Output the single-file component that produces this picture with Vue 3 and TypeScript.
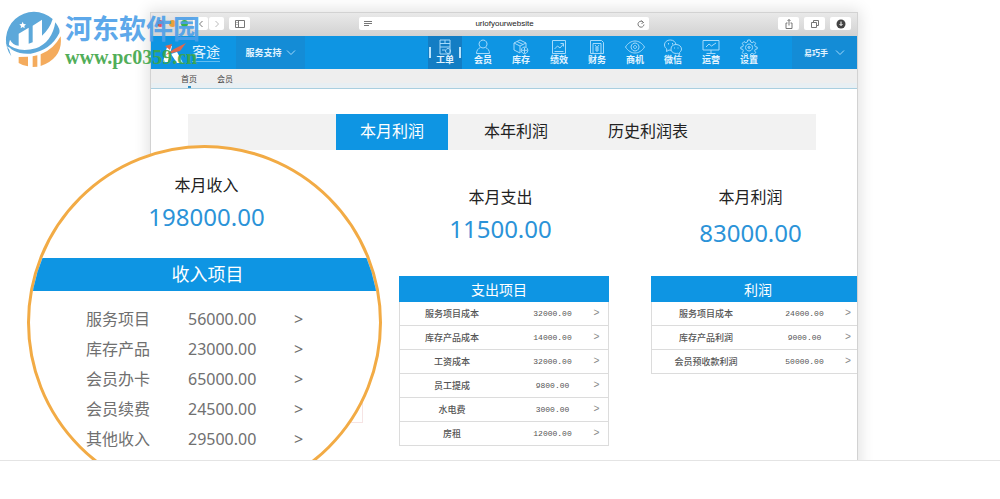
<script setup lang="ts">
import { ref } from 'vue'

interface NavItem { label: string; paths: string[] }
interface Entry { name: string; amount: string }

const address = ref('urlofyourwebsite')
const activeNav = ref(0)
const activeTab = ref(0)

const navItems: NavItem[] = [
  { label: '工单', paths: ['M3 1h10v14H3z', 'M3 4.5h10M3 8h10M8 1v3.5M5 11h3', 'M11 9.500a2.500 2.500 0 1 0 .1 0z'] },
  { label: '会员', paths: ['M8 1a4 4 0 1 0 .1 0z', 'M5.500 8.500C3 9.500 1.500 11.500 1.500 14.500h13c0-3-1.500-5-4-6'] },
  { label: '库存', paths: ['M1 4l6-3 6 3-6 3zM1 4v7l6 3V7M13 4v4', 'M4 2.500l6 3', 'M11.500 8a3.300 3.300 0 1 0 .1 0zM8.500 11.300h6M11.500 8.500v5.500'] },
  { label: '绩效', paths: ['M1.500 1.500h13v13h-13z', 'M3.500 10l3-3 2.500 2 3.500-4M3.500 12.500h9', 'M9.500 4.500h3v3'] },
  { label: '财务', paths: ['M1.500 1.500h11l2 2v11h-13z', 'M4 14V4.500h8V14', 'M6 6l2 2.500L10 6M8 8.500V13M6 9h4M6 11h4'] },
  { label: '商机', paths: ['M-1.500 8C1 4 4.500 2 8 2s7 2 9.500 6C15 12 11.500 14 8 14S1 12-1.500 8z', 'M8 4a4 4 0 1 0 .1 0z', 'M8 6.500a1.500 1.500 0 1 0 .1 0'] },
  { label: '微信', paths: ['M11 5.500C10.500 3 8.500 1 5.500 1 2 1-.5 3-.5 6c0 1.800 1 3 2.300 4L1.500 12.500 4 11l2 .3', 'M11 5.500c3 0 5.500 2 5.500 4.500 0 1.500-.8 2.600-2 3.500l.3 2-2.200-1.200C9 15 6 13 6 10s2.200-4.500 5-4.500z', 'M3.500 4v1.500M7.500 4v1.500M9.500 8.500v1M13 8.500v1'] },
  { label: '运营', paths: ['M0 1.500h16v9.500H0z', 'M8 11v3.500M3.500 14.500h9', 'M3 8l3-3 2.500 2L13 4'] },
  { label: '设置', paths: ['M6.800 1h2.400l.5 2 1.500.7 1.800-1.100 1.700 1.700-1.100 1.800.6 1.500 2 .5v1.800l-2 .5-.6 1.500 1.100 1.800-1.700 1.700-1.800-1.100-1.500.7-.5 2H6.800l-.5-2-1.500-.7L3 15.400l-1.700-1.700 1.100-1.800-.6-1.500-2-.5V8.100l2-.5.6-1.500L1.300 4.300 3 2.600l1.800 1.100L6.300 3z', 'M8 5a3.500 3.500 0 1 0 .1 0z', 'M8 7.500a1 1 0 1 0 .1 0'] },
]

const tabs = ['本月利润', '本年利润', '历史利润表']

const income: Entry[] = [
  { name: '服务项目', amount: '56000.00' },
  { name: '库存产品', amount: '23000.00' },
  { name: '会员办卡', amount: '65000.00' },
  { name: '会员续费', amount: '24500.00' },
  { name: '其他收入', amount: '29500.00' },
]

const reports: { key: string; title: string; total: string; heading: string; rows: Entry[] }[] = [
  {
    key: 'cost', title: '本月支出', total: '11500.00', heading: '支出项目',
    rows: [
      { name: '服务项目成本', amount: '32000.00' },
      { name: '库存产品成本', amount: '14000.00' },
      { name: '工资成本', amount: '32000.00' },
      { name: '员工提成', amount: '9800.00' },
      { name: '水电费', amount: '3000.00' },
      { name: '房租', amount: '12000.00' },
    ],
  },
  {
    key: 'profit', title: '本月利润', total: '83000.00', heading: '利润',
    rows: [
      { name: '服务项目成本', amount: '24000.00' },
      { name: '库存产品利润', amount: '9000.00' },
      { name: '会员预收款利润', amount: '50000.00' },
    ],
  },
]
</script>

<template>
  <div class="stage">
    <section class="window">
      <header class="titlebar">
        <span class="light red"></span><span class="light amber"></span><span class="light green"></span>
        <button class="chrome-btn back" aria-label="后退"><svg viewBox="0 0 8 8"><path d="M5.500 1L2.500 4l3 3" /></svg></button>
        <button class="chrome-btn forward" aria-label="前进"><svg viewBox="0 0 8 8"><path d="M2.500 1l3 3-3 3" /></svg></button>
        <button class="chrome-btn side" aria-label="边栏"><svg viewBox="0 0 10 8"><path d="M.5.5h9v7h-9zM3.500.5v7M1.500 2.500h1M1.500 4.500h1" /></svg></button>
        <div class="address">
          <svg viewBox="0 0 8 8"><path d="M0 1.500h8M0 3.500h8M0 5.500h5" /></svg>
          <input v-model="address" type="text" aria-label="网址" />
          <button class="reload" aria-label="刷新"><svg viewBox="0 0 8 8"><path d="M6.500 2.500A3 3 0 1 0 7 4.500M4.500.5l2 2-2 1" /></svg></button>
        </div>
        <div class="chrome-actions">
          <button class="chrome-btn" aria-label="分享"><svg viewBox="0 0 10 10"><path d="M3.500 4H2v5.500h6V4H6.500M5 6.500V.5M3.500 2L5 .5 6.500 2" /></svg></button>
          <button class="chrome-btn" aria-label="标签页"><svg viewBox="0 0 10 10"><path d="M1.500 3.500h5v5h-5zM3.500 3.500v-2h5v5h-2" /></svg></button>
          <button class="chrome-btn" aria-label="下载"><svg viewBox="0 0 10 10"><circle class="disc" cx="5" cy="5" r="4.500" /><path class="arrow" d="M5 2.500v4M3.500 5L5 6.500 6.500 5" /></svg></button>
        </div>
      </header>

      <nav class="nav">
        <a class="brand" href="#">
          <svg viewBox="0 0 26 22">
            <path d="M5 5l5-1-4 16H1z" fill="#fff" />
            <path d="M3 4l7-2-2 6z" fill="#e2674a" />
            <path d="M3 13l9-6L24 1l-6 8-8 2z" fill="#e2674a" />
            <path d="M9 12l6-2 6 11h-6z" fill="#fff" />
          </svg>
          <span class="brand-name">客途</span>
        </a>
        <button class="menu">服务支持<svg viewBox="0 0 10 8"><path d="M1 1.500l4 4 4-4" /></svg></button>
        <ul class="modules">
          <li v-for="(item, i) in navItems" :key="item.label">
            <button class="module" :class="{ active: i === activeNav }" @click="activeNav = i">
              <svg viewBox="-2 0 20 16"><path v-for="d in item.paths" :key="d" :d="d" /></svg>
              <span>{{ item.label }}</span>
            </button>
          </li>
        </ul>
        <button class="menu user">易巧手<svg viewBox="0 0 10 8"><path d="M1 1.500l4 4 4-4" /></svg></button>
      </nav>

      <div class="crumbs">
        <a class="current" href="#">首页</a>
        <a href="#">会员</a>
      </div>

      <div class="tabs" role="tablist">
        <button
          v-for="(tab, i) in tabs" :key="tab" class="tab" :class="{ active: i === activeTab }"
          role="tab" :aria-selected="i === activeTab" @click="activeTab = i"
        >{{ tab }}</button>
      </div>

      <div class="reports">
        <div class="report-slot"></div>
        <article v-for="report in reports" :key="report.key" class="report" :class="report.key">
          <div class="summary">
            <h2>{{ report.title }}</h2>
            <strong>{{ report.total }}</strong>
          </div>
          <table class="ledger">
            <colgroup><col class="col-name" /><col /><col class="col-go" /></colgroup>
            <thead><tr><th colspan="3">{{ report.heading }}</th></tr></thead>
            <tbody>
              <tr v-for="row in report.rows" :key="row.name">
                <td class="name">{{ row.name }}</td>
                <td class="amount">{{ row.amount }}</td>
                <td class="go">&gt;</td>
              </tr>
            </tbody>
          </table>
        </article>
      </div>
    </section>

    <section class="lens">
      <div class="lens-summary">
        <h2>本月收入</h2>
        <strong>198000.00</strong>
      </div>
      <h3>收入项目</h3>
      <table>
        <tbody>
          <tr v-for="row in income" :key="row.name">
            <td class="name">{{ row.name }}</td>
            <td class="amount">{{ row.amount }}</td>
            <td>&gt;</td>
          </tr>
        </tbody>
      </table>
    </section>

    <div class="watermark">
      <svg viewBox="15 18 168 168">
        <path d="M34 154A84 84 0 0 1 158 42Q150 70 126 92V44L98 62V112L86 116V68L56 86V122Q38 120 30 104Q22 126 34 154z" fill="#4b9fd6" />
        <path d="M18 122Q60 150 116 128Q156 110 172 62Q186 92 176 110Q140 148 84 152Q40 154 18 122z" fill="#fff" />
        <path d="M17 112Q52 146 108 130Q156 112 166 52Q182 74 178 84Q152 136 92 146Q36 150 17 112z" fill="#4b9fd6" />
        <path d="M56 156L84 155V184Q68 182 56 174zM98 154L112 151V185L98 186zM122 148Q160 134 182 94Q190 158 122 183z" fill="#f3a34c" />
        <path d="M68 50l3 7 7 1-5 5 1 7-6-4-6 4 1-7-5-5 7-1z" fill="#fff" />
      </svg>
      <div class="watermark-text">
        <span class="site-name">河东软件园</span>
        <span class="site-url">www.pc0359.cn</span>
      </div>
    </div>
  </div>
</template>

<style>
body {
  margin: 0;
  background: #fff;
}
</style>

<style scoped>
* {
  box-sizing: border-box;
}

.stage {
  position: relative;
  height: 461px;
  padding: 13px 143px 0 151px;
  overflow: hidden;
  border-bottom: 1px solid #e4e4e4;
  font-family: "Noto Sans", "Noto Sans CJK SC", sans-serif;
  color: #333;
}

button {
  margin: 0;
  padding: 0;
  border: 0;
  background: none;
  font: inherit;
  color: inherit;
}

a {
  color: inherit;
  text-decoration: none;
}

h2,
h3 {
  margin: 0;
  font-weight: 400;
}

svg {
  display: block;
  flex: none;
  fill: none;
}

.window {
  min-height: 500px;
  background: #fff;
  box-shadow: 0 0 0 1px #d2d2d2, 0 0 14px 3px rgba(0, 0, 0, 0.12);
}

.titlebar {
  display: flex;
  align-items: center;
  height: 23px;
  padding: 0 6px 2px 6px;
  background: linear-gradient(#e9e9e9, #d2d2d2);
}

.light {
  width: 7px;
  height: 7px;
  margin-right: 5px;
  border-radius: 50%;
}

.red { background: #e0575a; }
.amber { background: #e9a23b; }
.green { background: #37b24a; }

.chrome-btn {
  display: flex;
  align-items: center;
  justify-content: center;
  width: 21px;
  height: 13px;
  border-radius: 2px;
  background: #fff;
}

.chrome-btn svg,
.address svg {
  height: 8px;
  stroke: #777;
  stroke-width: 1;
}

.back { width: 15px; }
.forward { width: 15px; margin-left: 1px; }
.forward svg { stroke: #bbb; }
.side { margin-left: 5px; }
.chrome-btn .disc { fill: #444; stroke: none; }
.chrome-btn .arrow { stroke: #fff; }
.chrome-actions svg { height: 10px; }

.address {
  display: flex;
  flex: 1;
  align-items: center;
  height: 13px;
  margin: 0 129px 0 109px;
  padding: 0 4px 0 5px;
  border-radius: 2px;
  background: #fff;
}

.address input {
  flex: 1;
  min-width: 0;
  padding: 0;
  border: 0;
  background: none;
  font: 8px/13px "Liberation Sans", sans-serif;
  text-align: center;
  color: #222;
}

.chrome-actions {
  display: flex;
  gap: 5px;
}

.nav {
  display: flex;
  height: 33px;
  background: #0e95e3;
  font-size: 9px;
  font-weight: 700;
  color: #e4f4ff;
}

.nav svg {
  stroke: #a5dafb;
}

.brand {
  display: flex;
  align-items: center;
  gap: 4px;
  width: 85px;
  padding-left: 11px;
}

.nav .brand svg {
  width: 26px;
  height: 22px;
  stroke: none;
}

.brand-name {
  border-bottom: 1px solid #62bdf0;
  font-size: 14px;
  font-weight: 400;
  line-height: 18px;
}

.menu {
  display: flex;
  align-items: center;
  justify-content: center;
  gap: 4px;
  width: 69px;
  background: #148cd6;
}

.menu svg {
  width: 10px;
  height: 8px;
}

.user {
  gap: 7px;
  width: 65px;
  font-size: 8px;
}

.modules {
  display: flex;
  margin: 0 24px 0 auto;
  padding: 0;
  list-style: none;
}

.module {
  display: flex;
  flex-direction: column;
  align-items: center;
  width: 34px;
  height: 33px;
  margin: 0 2px;
  padding-top: 3px;
  line-height: 10px;
}

.module svg {
  width: 20px;
  height: 16px;
}

.module.active {
  background:
    linear-gradient(#b9e2fb, #b9e2fb) 1px 11px / 2px 11px no-repeat,
    linear-gradient(#b9e2fb, #b9e2fb) 31px 11px / 2px 11px no-repeat,
    #137dc4;
}

.crumbs {
  display: flex;
  gap: 20px;
  height: 20px;
  padding-left: 30px;
  border-bottom: 1px solid #a9cfe0;
  background: linear-gradient(#eee 14px, #e8eff3 14px);
  font-size: 8px;
  line-height: 20px;
  color: #444;
}

.crumbs a {
  position: relative;
}

.crumbs .current::after {
  position: absolute;
  bottom: 0;
  left: 7px;
  width: 3px;
  height: 2px;
  background: #2b8fc6;
  content: "";
}

.tabs {
  display: flex;
  gap: 12px;
  height: 36px;
  margin: 25px 41px 0 37px;
  padding-left: 148px;
  background: #f2f2f2;
}

.tab {
  padding: 0 24px 2px;
  font-size: 16px;
  line-height: 24px;
  color: #222;
}

.tab.active {
  background: #0e95e3;
  color: #fff;
}

.reports {
  display: grid;
  grid-template-columns: 212fr 210fr 212fr;
  column-gap: 36px;
  align-items: start;
}

.report-slot {
  height: 40px;
  margin-top: 233px;
  border: solid #f6e4e4;
  border-width: 0 1px 1px 0;
}

.summary {
  display: flex;
  flex-direction: column;
  align-items: center;
  height: 126px;
  padding: 35px 7px 0 0;
}

.summary h2,
.lens h2 {
  font-size: 16px;
  line-height: 24px;
  color: #222;
}

.summary strong,
.lens strong {
  font-size: 24px;
  font-weight: 400;
  line-height: 40px;
  color: #2b93d8;
}

.profit {
  padding-left: 6px;
}

.profit .summary strong {
  line-height: 48px;
}

.ledger {
  width: 100%;
  border-spacing: 0;
  table-layout: fixed;
}

.col-name { width: 50%; }
.col-go { width: 24px; }
.profit .col-go { width: 18px; }

.ledger th {
  height: 26px;
  padding: 0 10px 0 0;
  background: #0e95e3;
  font-size: 14px;
  font-weight: 400;
  line-height: 25px;
  color: #fff;
}

.profit .ledger th {
  padding: 0 0 0 8px;
}

.ledger td {
  height: 24px;
  padding: 0;
  border-bottom: 1px solid #dcdcdc;
  text-align: center;
  line-height: 22px;
}

.ledger .name {
  border-left: 1px solid #dcdcdc;
  font-size: 9px;
  font-weight: 500;
  color: #555;
}

.profit .ledger .name {
  padding-left: 6px;
}

.ledger .amount {
  padding-left: 16px;
  font-family: "Liberation Mono", monospace;
  font-size: 8px;
  color: #555;
}

.ledger .go {
  border-right: 1px solid #dcdcdc;
  font-family: "Liberation Mono", monospace;
  font-size: 10px;
  color: #888;
}

.profit .ledger .go {
  border-right: 0;
}

.lens {
  position: absolute;
  top: 145px;
  left: 27px;
  width: 355px;
  height: 355px;
  overflow: hidden;
  border: 3px solid #f2ab45;
  border-radius: 50%;
  background: #fff;
}

.lens-summary {
  display: flex;
  flex-direction: column;
  align-items: center;
  height: 110px;
  padding: 25px 0 0 4px;
}

.lens h3 {
  height: 33px;
  padding-left: 6px;
  background: #0e95e3;
  font-size: 18px;
  line-height: 33px;
  text-align: center;
  color: #fff;
}

.lens table {
  width: 100%;
  margin-top: 13px;
  border-spacing: 0;
  table-layout: fixed;
  font-size: 16px;
  line-height: 30px;
  color: #707070;
}

.lens td {
  padding: 0;
}

.lens .name {
  width: 158px;
  padding-left: 56px;
}

.lens .amount {
  width: 106px;
}

.watermark {
  position: absolute;
  top: 11px;
  left: 5px;
  display: flex;
  gap: 4px;
  opacity: 0.9;
}

.watermark > svg {
  width: 56px;
  height: 56px;
}

.watermark-text {
  display: flex;
  flex-direction: column;
}

.site-name {
  font-size: 27px;
  font-weight: 700;
  line-height: 36px;
  color: #4c9fe8;
}

.site-url {
  font-family: "Liberation Serif", serif;
  font-size: 20px;
  font-weight: 700;
  line-height: 20px;
  color: #3fa648;
}
</style>
